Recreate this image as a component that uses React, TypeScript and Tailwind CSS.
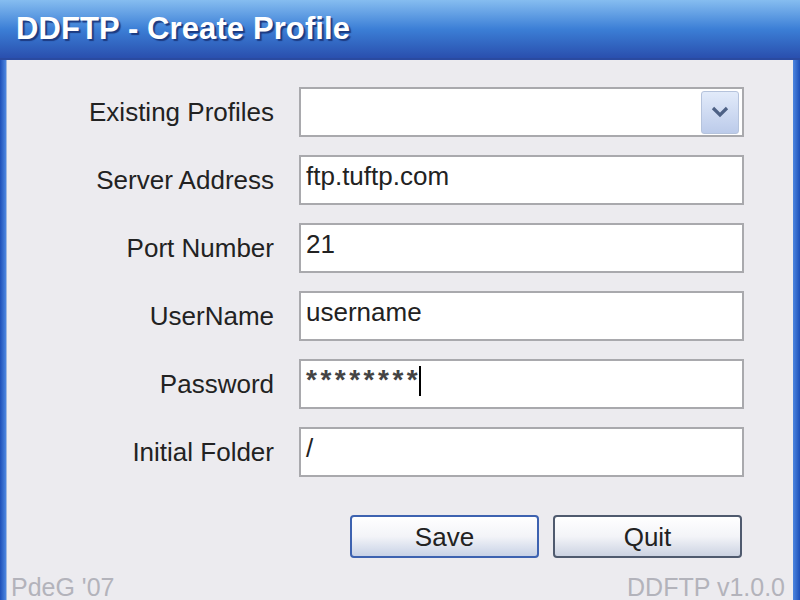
import { useState } from "react";

const fields = [
  { label: "Server Address", value: "ftp.tuftp.com" },
  { label: "Port Number", value: "21" },
  { label: "UserName", value: "username" },
  { label: "Password", value: "********", caret: true },
  { label: "Initial Folder", value: "/" },
];

const App = () => {
  const [profile] = useState("");

  return (
    <div className="w-[800px] h-[600px] flex flex-col overflow-hidden font-['Liberation_Sans',Tahoma,sans-serif]">
      {/* title bar */}
      <div className="h-[60px] shrink-0 bg-gradient-to-b from-[#86bdf0] via-[#3c7fd6] to-[#2a4fae] border-b-2 border-[#2a4aa0] flex items-center pl-[16px]">
        <h1 className="text-white font-bold text-[31px] tracking-[0.1px] [text-shadow:2px_2px_1px_#1c3a80]">
          DDFTP - Create Profile
        </h1>
      </div>

      <div className="flex-1 flex bg-[#2c5ec4]">
        <div className="w-[6px] bg-gradient-to-r from-[#1d4fb8] to-[#4d86e0]" />
        <div className="flex-1 bg-[#ecebef] border-l border-[#9fb8e0] flex flex-col">
          <div className="pt-[27px] pl-[75px] pr-[49px] flex flex-col gap-[18px]">
            <div className="flex items-center">
              <label className="w-[192px] text-right text-[26px] text-[#222]">
                Existing Profiles
              </label>
              <div className="ml-[25px] flex-1 h-[50px] bg-white border-2 border-[#a9a9ad] flex items-center justify-end pr-[3px]">
                <span className="sr-only">{profile}</span>
                <div className="w-[38px] h-[43px] rounded-[3px] border border-[#b5c3dc] bg-gradient-to-b from-[#e2ebfa] to-[#bccbea] flex items-center justify-center">
                  <svg width="18" height="12" viewBox="0 0 18 12">
                    <path
                      d="M2 2 L9 9 L16 2"
                      fill="none"
                      stroke="#4d6185"
                      strokeWidth="3.2"
                    />
                  </svg>
                </div>
              </div>
            </div>
            {fields.map((f) => (
              <div key={f.label} className="flex items-center">
                <label className="w-[192px] text-right text-[26px] text-[#222]">
                  {f.label}
                </label>
                <div className="ml-[25px] flex-1 h-[50px] bg-white border-2 border-[#a9a9ad] flex items-center pl-[5px]">
                  {f.caret ? (
                    <>
                      <span className="text-[28px] font-bold text-[#444] leading-none tracking-[3.5px] -mt-[8px]">
                        {f.value}
                      </span>
                      <span className="w-[2px] h-[30px] bg-black -ml-[2px] -mt-[6px]" />
                    </>
                  ) : (
                    <span className="text-[26px] text-[#222] leading-none -mt-[8px]">
                      {f.value}
                    </span>
                  )}
                </div>
              </div>
            ))}
          </div>

          <div className="flex justify-end gap-[14px] pr-[51px] mt-[38px]">
            <button className="w-[189px] h-[43px] rounded-[4px] border-2 border-[#3d62b0] bg-gradient-to-b from-white via-[#f3f4f8] to-[#c8d2e6] text-[26px] text-[#222] leading-none">
              Save
            </button>
            <button className="w-[189px] h-[43px] rounded-[4px] border-2 border-[#4f5a6e] bg-gradient-to-b from-white via-[#f3f4f8] to-[#ccd3e2] text-[26px] text-[#222] leading-none">
              Quit
            </button>
          </div>

          <div className="mt-auto flex justify-between items-end pl-[4px] pr-[8px] text-[25px] text-[#b3b3bb] leading-none">
            <span>PdeG '07</span>
            <span>DDFTP v1.0.0</span>
          </div>
        </div>
        <div className="w-[7px] bg-gradient-to-r from-[#4d86e0] to-[#1d4fb8]" />
      </div>
    </div>
  );
};

export default App;
